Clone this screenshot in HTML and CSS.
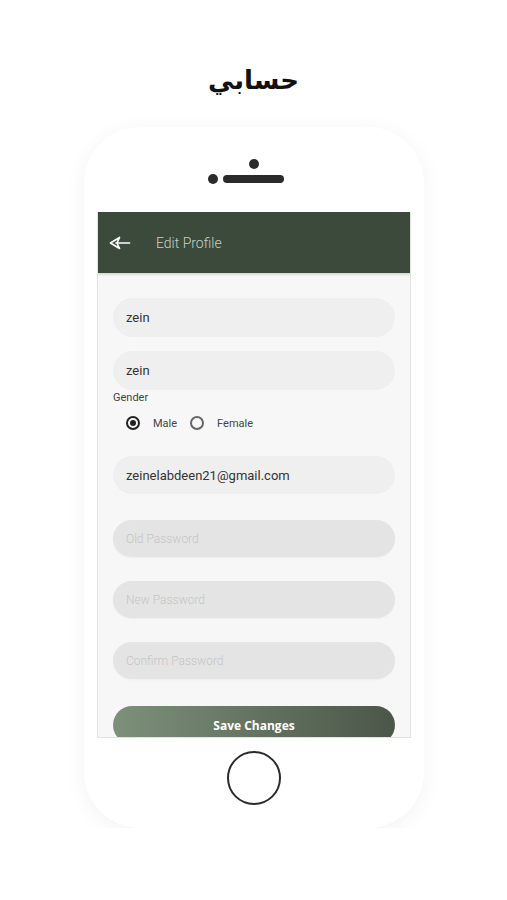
FILE: index.html
```html
<!DOCTYPE html>
<html lang="ar">
<head>
  <meta charset="UTF-8" />
  <meta name="viewport" content="width=device-width, initial-scale=1.0" />
  <title>حسابي</title>
  <link rel="stylesheet" href="styles.css">
</head>
<body>
  <!-- Page title -->
  <h1 class="page-title">حسابي</h1>

  <!-- Phone mockup -->
  <div class="phone">
    <div class="speaker">
      <span class="cam-dot"></span>
      <div class="speaker-row">
        <span class="sensor-dot"></span>
        <span class="speaker-bar"></span>
      </div>
    </div>

    <div class="screen" dir="ltr">
      <header class="app-bar">
        <svg class="back-icon" width="22" height="14" viewBox="0 0 22 14">
          <path d="M1.5 7 L10.5 1.5 L8 7 L10.5 12.5 Z" fill="none" stroke="#fff" stroke-width="1.7" stroke-linejoin="round"/>
          <path d="M7 7 H20.5" stroke="#fff" stroke-width="1.7" stroke-linecap="round"/>
        </svg>
        <span class="app-title">Edit Profile</span>
      </header>

      <form class="profile-form">
        <div class="field">zein</div>
        <div class="field">zein</div>

        <div class="gender-label">Gender</div>
        <div class="radio-row">
          <span class="radio checked"></span>
          <span class="radio-text">Male</span>
          <span class="radio"></span>
          <span class="radio-text">Female</span>
        </div>

        <div class="field email">zeinelabdeen21@gmail.com</div>

        <div class="field pass">Old Password</div>
        <div class="field pass">New Password</div>
        <div class="field pass">Confirm Password</div>

        <button type="button" class="save-btn">Save Changes</button>
      </form>
    </div>

    <div class="home-btn"></div>
  </div>
</body>
</html>
```

FILE: styles.css
```css
/* Base */
body {
  margin: 0;
  background: #fff;
  font-family: Roboto, "Liberation Sans", sans-serif;
  display: flex;
  flex-direction: column;
  align-items: center;
}
/* Arabic title above the phone */
.page-title {
  margin: 58px 0 24px;
  font-family: "DejaVu Sans", sans-serif;
  font-size: 26px;
  font-weight: bold;
  line-height: 45px;
  color: #111;
}
/* Phone frame */
.phone {
  width: 340px;
  height: 701px;
  box-sizing: border-box;
  margin-left: 1px;
  padding-top: 32px;
  border-radius: 56px;
  background: #fff;
  box-shadow: 0 4px 22px rgba(0, 0, 0, 0.05);
  display: flex;
  flex-direction: column;
  align-items: center;
}
.speaker {
  display: flex;
  flex-direction: column;
  align-items: center;
  gap: 5px;
}
.cam-dot,
.sensor-dot {
  width: 10px;
  height: 10px;
  border-radius: 50%;
  background: #2b2b2b;
}
.speaker-row {
  display: flex;
  align-items: center;
  gap: 5px;
  padding-right: 16px;
}
.speaker-bar {
  width: 61px;
  height: 8px;
  border-radius: 4px;
  background: #2b2b2b;
}
/* App screen */
.screen {
  width: 314px;
  height: 526px;
  margin-top: 28px;
  box-sizing: border-box;
  border: 1px solid #e2e2e2;
  border-top: none;
  background: #f7f7f7;
  overflow: hidden;
}
.app-bar {
  height: 61px;
  margin: 0 -1px;
  background: #3b4a3a;
  display: flex;
  align-items: center;
  padding-left: 12px;
  box-shadow: 0 1px 3px rgba(0, 0, 0, 0.2);
}
.back-icon {
  margin-right: 25px;
}
.app-title {
  color: #c9d0c7;
  font-size: 14px;
  font-weight: 300;
}
/* Form */
.profile-form {
  display: flex;
  flex-direction: column;
  padding: 25px 15px 0;
}
.field {
  height: 39px;
  border-radius: 20px;
  background: #efefef;
  display: flex;
  align-items: center;
  padding-left: 13px;
  margin-bottom: 14px;
  font-size: 13px;
  color: #333;
}
.gender-label {
  margin-top: -13px;
  font-size: 11px;
  color: #444;
}
.radio-row {
  display: flex;
  align-items: center;
  height: 20px;
  margin: 9px 0 23px 13px;
}
.radio {
  width: 10px;
  height: 10px;
  border: 2px solid #666;
  border-radius: 50%;
  margin-right: 13px;
  position: relative;
}
.radio.checked {
  border-color: #222;
}
.radio.checked::after {
  content: "";
  position: absolute;
  top: 2px;
  left: 2px;
  width: 6px;
  height: 6px;
  border-radius: 50%;
  background: #222;
}
.radio-text {
  font-size: 11px;
  color: #444;
  margin-right: 13px;
}
.email {
  height: 38px;
  margin-bottom: 26px;
}
.pass {
  height: 37px;
  margin-bottom: 24px;
  background: #e4e4e4;
  color: #c4c4c4;
  font-size: 12px;
  font-weight: 300;
  box-shadow: 0 1px 2px rgba(0, 0, 0, 0.04);
}
.save-btn {
  height: 38px;
  margin-top: 3px;
  border: none;
  border-radius: 19px;
  background: linear-gradient(90deg, #7d917a, #4b5648);
  color: #fff;
  font-family: "Open Sans", sans-serif;
  font-size: 12px;
  font-weight: bold;
  padding-bottom: 0;
}
/* Home button */
.home-btn {
  width: 50px;
  height: 50px;
  margin-top: 13px;
  border: 2px solid #2a2a2a;
  border-radius: 50%;
}
```
